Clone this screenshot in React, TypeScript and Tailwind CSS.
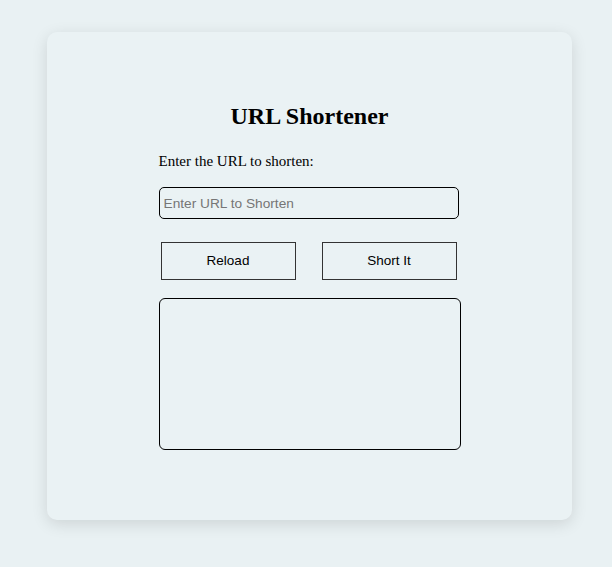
export default function App() {
  return (
    <div className="min-h-[567px] w-full bg-[#e9f1f3] pt-[32px] pl-[47px]">
      <div className="w-[525px] h-[488px] rounded-[10px] bg-[#eaf2f4] shadow-[0_4px_16px_rgba(0,0,0,0.12)] pt-[70px] flex flex-col items-center">
        <h1 className="text-[24px] leading-[28px] font-bold text-black [font-family:'Liberation_Serif',serif]">
          URL Shortener
        </h1>
        <div className="w-[302px] mt-[19px]">
          <p className="text-[15px] leading-[24px] text-black [font-family:'Liberation_Serif',serif]">
            Enter the URL to shorten:
          </p>
          <input
            type="text"
            placeholder="Enter URL to Shorten"
            className="mt-[14px] block w-[300px] h-[32px] rounded-[5px] border border-black bg-transparent px-[4px] text-[13.7px] text-black placeholder:text-[#767676] [font-family:'Liberation_Sans',Arial,sans-serif] outline-none"
          />
          <div className="mt-[23px] flex pl-[2px] gap-[26px]">
            <button className="w-[135px] h-[38px] border border-[#333] bg-transparent text-[13.5px] text-black [font-family:'Liberation_Sans',Arial,sans-serif]">
              Reload
            </button>
            <button className="w-[135px] h-[38px] border border-[#333] bg-transparent text-[13.5px] text-black [font-family:'Liberation_Sans',Arial,sans-serif]">
              Short It
            </button>
          </div>
          <textarea className="mt-[18px] block w-[302px] h-[152px] rounded-[6px] border border-black bg-transparent resize-none outline-none" />
        </div>
      </div>
    </div>
  );
}
